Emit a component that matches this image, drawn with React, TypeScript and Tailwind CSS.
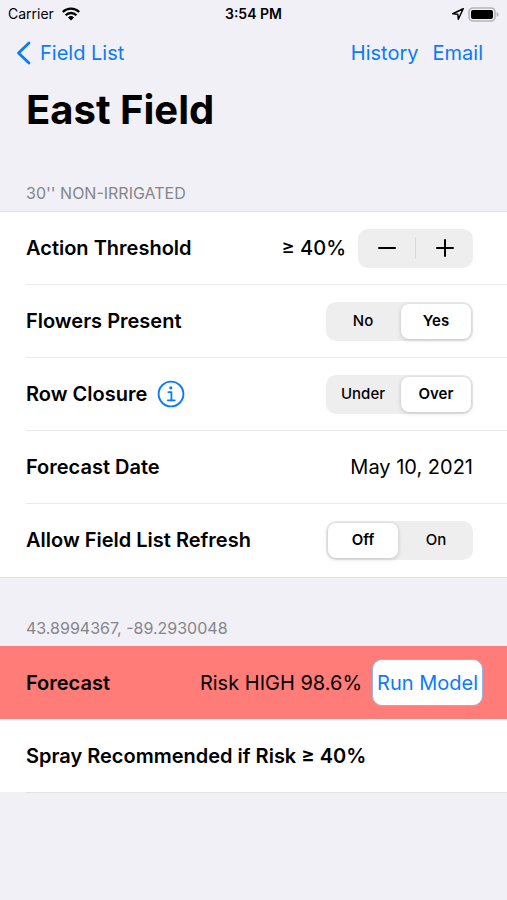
import { useState } from 'react'
import type { ReactNode } from 'react'

type SegmentedProps = {
  name: string
  label: string
  options: string[]
  initial: string
}

function WifiIcon() {
  return (
    <svg viewBox="0 0 18 14" className="h-3.5 w-[18px]" aria-hidden="true">
      <path d="M9 13.600 6 10.400a4.300 4.300 0 0 1 6 0Z" fill="currentColor" />
      <path
        d="M.8 5a11.700 11.700 0 0 1 16.400 0M3.600 8.200a7.700 7.700 0 0 1 10.800 0"
        fill="none"
        stroke="currentColor"
        strokeWidth="2.300"
      />
    </svg>
  )
}

function LocationIcon() {
  return (
    <svg viewBox="0 0 12 12" className="size-3" aria-hidden="true">
      <path
        d="M11.200.8.8 5.700l5 .5.500 5Z"
        fill="none"
        stroke="currentColor"
        strokeWidth="1.500"
        strokeLinejoin="round"
      />
    </svg>
  )
}

function BatteryIcon() {
  return (
    <svg viewBox="0 0 31 15" className="h-[15px] w-[31px]" aria-hidden="true">
      <rect x="1" y="1" width="26" height="13" rx="4" fill="none" stroke="#b5b5b8" strokeWidth="1.600" />
      <rect x="3" y="3" width="22" height="9" rx="2" fill="currentColor" />
      <path d="M28.600 5v5c1.200-.4 2-1.300 2-2.500s-.8-2.100-2-2.500Z" fill="#b5b5b8" />
    </svg>
  )
}

function InfoIcon() {
  return (
    <svg viewBox="0 0 28 28" className="size-7" fill="none" stroke="currentColor" aria-hidden="true">
      <circle cx="14" cy="14" r="12.400" strokeWidth="1.900" />
      <circle cx="13.800" cy="7.800" r="1.600" fill="currentColor" stroke="none" />
      <path d="M11.400 12.200h3v8M10.800 20.300h7" strokeWidth="1.800" strokeLinecap="round" strokeLinejoin="round" />
    </svg>
  )
}

function Segmented({ name, label, options, initial }: SegmentedProps) {
  const [value, setValue] = useState(initial)

  return (
    <fieldset aria-label={label} className="flex h-[39px] w-[147px] justify-between rounded-[10px] bg-[#eeeeee] p-0.5">
      {options.map(option => (
        <label
          key={option}
          className={
            'relative flex w-[70px] cursor-pointer items-center justify-center rounded-lg text-[15px] '
            + (value === option ? 'bg-white font-semibold shadow-[0_1px_4px_rgba(0,0,0,0.2)]' : 'font-medium')
          }
        >
          <input
            type="radio"
            name={name}
            value={option}
            checked={value === option}
            onChange={() => setValue(option)}
            className="absolute inset-0 cursor-pointer appearance-none"
          />
          {option}
        </label>
      ))}
    </fieldset>
  )
}

function Row({ title, children }: { title: ReactNode, children: ReactNode }) {
  return (
    <li className="ml-[26px] flex h-[73px] items-center justify-between border-b border-[#e9e9ea] pr-[34px] last:border-transparent">
      <div className="flex items-center gap-2.5 text-xl font-semibold">{title}</div>
      {children}
    </li>
  )
}

export default function App() {
  const [threshold, setThreshold] = useState(40)

  return (
    <div className="min-h-screen bg-[#f1f0f6] font-['Inter',sans-serif] text-black">
      <div className="grid h-7 grid-cols-3 items-center px-2 text-sm">
        <div className="flex items-center gap-2">
          Carrier
          <WifiIcon />
        </div>
        <div className="text-center font-semibold">3:54 PM</div>
        <div className="flex items-center justify-end gap-1">
          <LocationIcon />
          <BatteryIcon />
        </div>
      </div>

      <nav className="flex h-[49px] items-center justify-between pr-6 pl-4 text-xl text-[#0a7aff]">
        <a href="#fields" className="flex items-center gap-2">
          <svg viewBox="0 0 16 24" className="h-6 w-4" fill="none" stroke="currentColor" aria-hidden="true">
            <path d="M13 2 2.500 12 13 22" strokeWidth="2.800" strokeLinecap="round" strokeLinejoin="round" />
          </svg>
          Field List
        </a>
        <div className="flex gap-3.5">
          <a href="#history">History</a>
          <a href="#email">Email</a>
        </div>
      </nav>

      <main>
        <h1 className="px-[26px] pt-2 text-[40px] leading-[50px] font-bold">East Field</h1>

        <section>
          <h2 className="px-[26px] pt-12 pb-2 text-base leading-5 text-[#85858a]">30'' NON-IRRIGATED</h2>

          <ul className="border-y border-[#e2e2e6] bg-white">
            <Row title="Action Threshold">
              <div className="flex items-center gap-3">
                <div className="text-xl font-medium">≥ {threshold}%</div>
                <div className="flex h-[39px] w-[115px] items-center rounded-[10px] bg-[#eeeeee]">
                  <button
                    type="button"
                    aria-label="Decrease threshold"
                    className="flex h-full flex-1 items-center justify-center"
                    onClick={() => setThreshold(threshold - 1)}
                  >
                    <svg viewBox="0 0 18 18" className="size-[18px]" stroke="currentColor" strokeWidth="2">
                      <path d="M1 9h16" strokeLinecap="round" />
                    </svg>
                  </button>
                  <div className="h-[22px] w-px bg-[#d8d8da]" />
                  <button
                    type="button"
                    aria-label="Increase threshold"
                    className="flex h-full flex-1 items-center justify-center"
                    onClick={() => setThreshold(threshold + 1)}
                  >
                    <svg viewBox="0 0 18 18" className="size-[18px]" stroke="currentColor" strokeWidth="2">
                      <path d="M1 9h16M9 1v16" strokeLinecap="round" />
                    </svg>
                  </button>
                </div>
              </div>
            </Row>

            <Row title="Flowers Present">
              <Segmented name="flowers" label="Flowers Present" options={['No', 'Yes']} initial="Yes" />
            </Row>

            <Row
              title={(
                <>
                  Row Closure
                  <button type="button" aria-label="About row closure" className="text-[#0a7aff]">
                    <InfoIcon />
                  </button>
                </>
              )}
            >
              <Segmented name="closure" label="Row Closure" options={['Under', 'Over']} initial="Over" />
            </Row>

            <Row title="Forecast Date">
              <div className="text-xl">May 10, 2021</div>
            </Row>

            <Row title="Allow Field List Refresh">
              <Segmented name="refresh" label="Allow Field List Refresh" options={['Off', 'On']} initial="Off" />
            </Row>
          </ul>
        </section>

        <section>
          <h2 className="px-[26px] pt-10 pb-2 text-base leading-5 text-[#85858a]">43.8994367, -89.2930048</h2>

          <div className="flex h-[73px] items-center justify-between bg-[#ff7c79] pr-6 pl-[26px] text-xl">
            <div className="font-semibold">Forecast</div>
            <div className="flex items-center gap-2.5">
              <div>Risk HIGH 98.6%</div>
              <button
                type="button"
                className="h-[47px] rounded-[10px] border border-[#8fb4e8] bg-white px-1 text-[#0a7aff]"
              >
                Run Model
              </button>
            </div>
          </div>

          <div className="flex h-[73px] items-center bg-white px-[26px] text-xl font-semibold">
            Spray Recommended if Risk ≥ {threshold}%
          </div>
          <div className="ml-[26px] h-px bg-[#e2e2e6]" />
        </section>
      </main>
    </div>
  )
}
